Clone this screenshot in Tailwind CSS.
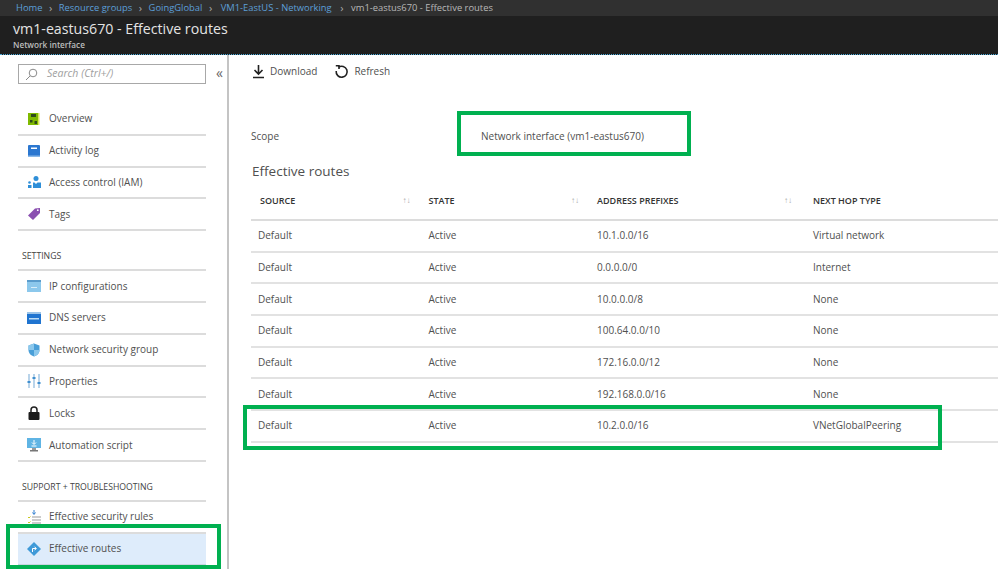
<!DOCTYPE html>
<html lang="en">
<head>
<meta charset="utf-8">
<title>vm1-eastus670 - Effective routes</title>
<script src="https://cdn.jsdelivr.net/npm/@tailwindcss/browser@4"></script>
</head>
<body class="relative h-[585px] w-[998px] overflow-hidden bg-white font-['Open_Sans',sans-serif] text-[10px] text-[#505050]">

<!-- Header -->
<header class="h-[55px] border-b border-dotted border-[#4aa8d8] bg-[#1f1f1f]">
  <nav class="flex h-[16px] items-center gap-[6.5px] bg-[#303030] pl-[16px] text-[9.4px] text-[#5c9fd8]">
    <span>Home</span><span class="text-[11px] text-[#aaa]">›</span>
    <span>Resource groups</span><span class="text-[11px] text-[#aaa]">›</span>
    <span>GoingGlobal</span><span class="text-[11px] text-[#aaa]">›</span>
    <span class="ml-[2px]">VM1-EastUS - Networking</span><span class="ml-[2px] text-[11px] text-[#aaa]">›</span>
    <span class="ml-[1px] text-[#b8b8b8]">vm1-eastus670 - Effective routes</span>
  </nav>
  <h1 class="pl-[13px] pt-[3px] text-[14.2px] leading-[20px] text-[#e4e4e4]">vm1-eastus670 - Effective routes</h1>
  <p class="pl-[13px] text-[8.200px] font-semibold leading-[11px] text-[#bdbdbd]">Network interface</p>
</header>

<div class="flex h-[514px]">
  <!-- Sidebar -->
  <aside class="h-full w-[229px] shrink-0 border-r-2 border-[#c4c4c4] pl-[18px]">
    <div class="flex items-center">
      <div class="mt-[9px] flex h-[20px] w-[188px] items-center gap-[9px] border border-[#a8a8a8] pl-[6px] text-[10.5px] italic text-[#a0a0a0]">
        <svg class="h-[13px] w-[13px]" viewBox="0 0 13 13" fill="none" stroke="#8a8a8a" stroke-width="1"><circle cx="8" cy="5" r="3.8"/><path d="M5.2 7.8 1 12"/></svg>
        <span>Search (Ctrl+/)</span>
      </div>
      <span class="ml-[10px] mt-[6px] text-[14px] leading-none text-[#666]">«</span>
    </div>

    <ul class="mt-[20px] w-[188px]">
      <li class="flex h-[31.8px] items-center gap-[8px] border-b-2 border-[#dcdcdc] pl-[9px]">
        <svg class="h-[14px] w-[14px] shrink-0" viewBox="0 0 14 14"><rect x="1" y="1" width="10" height="12" fill="#7fba00"/><rect x="11" y="1" width="1.5" height="12" fill="#d8e85a"/><rect x="4" y="2" width="5" height="3" fill="#2f4a1a"/><rect x="3" y="8" width="2.5" height="2.5" fill="#2f4a1a"/><rect x="7.5" y="9" width="2.5" height="3" fill="#2f4a1a"/></svg>
        <span>Overview</span>
      </li>
      <li class="flex h-[31.8px] items-center gap-[8px] border-b-2 border-[#dcdcdc] pl-[9px]">
        <svg class="h-[14px] w-[14px] shrink-0" viewBox="0 0 14 14"><rect x="1" y="1" width="12" height="12" rx="1" fill="#2b77d0"/><rect x="4" y="3.5" width="6" height="1.5" fill="#fff"/><rect x="1" y="11.5" width="12" height="1.5" fill="#8ab8e8"/></svg>
        <span>Activity log</span>
      </li>
      <li class="flex h-[31.8px] items-center gap-[8px] border-b-2 border-[#dcdcdc] pl-[9px]">
        <svg class="h-[14px] w-[14px] shrink-0" viewBox="0 0 14 14"><circle cx="9" cy="3.5" r="2.5" fill="#2f8fd8"/><path d="M6 13V7.5h1.5L9 9l1.5-1.5H14V13Z" fill="#2f8fd8"/><circle cx="2.5" cy="7.5" r="1.3" fill="#2f8fd8"/><rect x="1" y="10" width="3.5" height="3" fill="#2f8fd8"/></svg>
        <span>Access control (IAM)</span>
      </li>
      <li class="flex h-[31.8px] items-center gap-[8px] border-b-2 border-[#dcdcdc] pl-[9px]">
        <svg class="h-[14px] w-[14px] shrink-0" viewBox="0 0 14 14"><path d="M1 8.5 8 1.5l5-.5v5l-7 7Z" fill="#8a4fb0"/><circle cx="10.8" cy="3.2" r=".9" fill="#fff"/></svg>
        <span>Tags</span>
      </li>
    </ul>

    <h2 class="mt-[19px] flex h-[21px] w-[188px] items-start border-b-2 border-[#dcdcdc] pl-[4px] text-[8.700px] leading-[13px] text-[#444]">SETTINGS</h2>
    <ul class="w-[188px]">
      <li class="flex h-[31.8px] items-center gap-[8px] border-b-2 border-[#dcdcdc] pl-[9px]">
        <svg class="h-[14px] w-[14px] shrink-0" viewBox="0 0 14 14"><rect y="1" width="14" height="12" fill="#8cc8ec"/><rect y="1" width="14" height="2" fill="#5a9ccc"/><rect x="4" y="8" width="6" height="1" fill="#d8eefa"/></svg>
        <span>IP configurations</span>
      </li>
      <li class="flex h-[31.8px] items-center gap-[8px] border-b-2 border-[#dcdcdc] pl-[9px]">
        <svg class="h-[14px] w-[14px] shrink-0" viewBox="0 0 14 14"><rect y="1" width="14" height="12" fill="#1f74d0"/><rect y="1" width="14" height="2" fill="#9cc4e8"/><rect x="2" y="7" width="10" height="1.5" fill="#bcdcf4"/></svg>
        <span>DNS servers</span>
      </li>
      <li class="flex h-[31.8px] items-center gap-[8px] border-b-2 border-[#dcdcdc] pl-[9px]">
        <svg class="h-[14px] w-[14px] shrink-0" viewBox="0 0 14 14"><path d="M7 .5 12.5 2.5V7c0 3.5-2.5 5.5-5.5 6.5C4 12.500 1.500 10.500 1.500 7V2.500Z" fill="#4a9fd8"/><path d="M7 .5V7H1.500V2.500ZM7 7h5.500c0 3.500-2.500 5.500-5.500 6.500Z" fill="#8cc8ec"/></svg>
        <span>Network security group</span>
      </li>
      <li class="flex h-[31.8px] items-center gap-[8px] border-b-2 border-[#dcdcdc] pl-[9px]">
        <svg class="h-[14px] w-[14px] shrink-0" viewBox="0 0 14 14"><path d="M2 0v14M7 0v14M12 0v14" stroke="#8cb8dc" stroke-width="1.200"/><rect x=".5" y="7" width="3" height="2" fill="#3f8fd0"/><rect x="5.500" y="3" width="3" height="2" fill="#3f8fd0"/><rect x="10.500" y="8" width="3" height="2" fill="#3f8fd0"/></svg>
        <span>Properties</span>
      </li>
      <li class="flex h-[31.8px] items-center gap-[8px] border-b-2 border-[#dcdcdc] pl-[9px]">
        <svg class="h-[14px] w-[14px] shrink-0" viewBox="0 0 14 14"><path d="M4 6V4a3 3 0 0 1 6 0v2" fill="none" stroke="#222" stroke-width="1.500"/><rect x="1.500" y="6" width="11" height="8" rx="1" fill="#1c1c1c"/></svg>
        <span>Locks</span>
      </li>
      <li class="flex h-[31.8px] items-center gap-[8px] border-b-2 border-[#dcdcdc] pl-[9px]">
        <svg class="h-[14px] w-[14px] shrink-0" viewBox="0 0 14 14"><rect y="0" width="14" height="10" fill="#5fb4e4"/><path d="M7 2v4M5 4.500 7 6.500 9 4.500M4.500 8h5" stroke="#fff" fill="none"/><rect x="5" y="10" width="4" height="2" fill="#999"/><rect x="3" y="12" width="8" height="1.500" fill="#777"/></svg>
        <span>Automation script</span>
      </li>
    </ul>

    <h2 class="mt-[19px] flex h-[21px] w-[188px] items-start border-b-2 border-[#dcdcdc] pl-[4px] text-[8.700px] leading-[13px] text-[#444]">SUPPORT + TROUBLESHOOTING</h2>
    <ul class="w-[188px]">
      <li class="flex h-[31.8px] items-center gap-[8px] border-b-2 border-[#dcdcdc] pl-[9px]">
        <svg class="h-[14px] w-[14px] shrink-0" viewBox="0 0 14 14"><path d="M7 0v4M5.500 2.500 7 4.500 8.500 2.500" stroke="#2f7fd0" fill="none"/><path d="M5 7h9M5 10h9M5 13h9" stroke="#999"/><path d="M1 7l1 1 1.500-1.500M1 12l1 1 1.500-1.500" stroke="#c8c820" fill="none"/></svg>
        <span>Effective security rules</span>
      </li>
      <li class="flex h-[31.8px] items-center gap-[8px] border-b-2 border-[#c8d4e0] bg-[#deecfb] pl-[9px]">
        <svg class="h-[14px] w-[14px] shrink-0" viewBox="0 0 14 14"><path d="M7 0 14 7 7 14 0 7Z" fill="#3f9ad8"/><path d="M5.500 10V6.500H9M7.500 4.700 9.300 6.500 7.500 8.300" stroke="#fff" fill="none"/></svg>
        <span>Effective routes</span>
      </li>
    </ul>
  </aside>

  <!-- Main -->
  <main class="min-w-0 flex-1 pl-[22px]">
    <div class="flex h-[32px] items-center gap-[17px]">
      <span class="flex items-center gap-[4px]">
        <svg class="h-[15px] w-[15px]" viewBox="0 0 15 15" fill="none" stroke="#222" stroke-width="1.600"><path d="M7.500 1v8.500M3.500 6 7.500 10 11.500 6M2 13.500h11"/></svg>
        Download
      </span>
      <span class="flex items-center gap-[5px]">
        <svg class="h-[15px] w-[15px]" viewBox="0 0 15 15" fill="none" stroke="#222" stroke-width="1.600"><path d="M4.500 3.200a5.500 5.500 0 1 1-2.300 3.800"/><path d="M1.800 1.800h3.200V5"/></svg>
        Refresh
      </span>
    </div>

    <div class="mt-[40px] flex h-[18px] items-center">
      <span class="w-[230px]">Scope</span>
      <span>Network interface (vm1-eastus670)</span>
    </div>
    <h2 class="mt-[16px] pl-[1px] text-[13.5px] leading-[20px] text-[#505050]">Effective routes</h2>

    <div class="mt-[2px] w-[747px]">
      <div class="grid h-[38px] grid-cols-[168.5px_168.5px_216px_1fr] items-center border-b-2 border-[#dcdcdc] text-[9px] font-semibold text-[#333]">
        <div class="flex items-center justify-between pl-[9px] pr-[9px]"><span>SOURCE</span><span class="mb-[3px] text-[8px] text-[#aaa]">↑↓</span></div>
        <div class="flex items-center justify-between pl-[9px] pr-[9px]"><span>STATE</span><span class="mb-[3px] text-[8px] text-[#aaa]">↑↓</span></div>
        <div class="flex items-center justify-between pl-[9px] pr-[12px]"><span>ADDRESS PREFIXES</span><span class="mb-[3px] text-[8px] text-[#aaa]">↑↓</span></div>
        <div class="pl-[9px]">NEXT HOP TYPE</div>
      </div>
      <div class="grid h-[31.7px] grid-cols-[168.5px_168.5px_216px_1fr] items-center border-b-2 border-[#e2e2e2]">
        <div class="pl-[7px]">Default</div><div class="pl-[9px]">Active</div><div class="pl-[9px]">10.1.0.0/16</div><div class="pl-[9px]">Virtual network</div>
      </div>
      <div class="grid h-[31.7px] grid-cols-[168.5px_168.5px_216px_1fr] items-center border-b-2 border-[#e2e2e2]">
        <div class="pl-[7px]">Default</div><div class="pl-[9px]">Active</div><div class="pl-[9px]">0.0.0.0/0</div><div class="pl-[9px]">Internet</div>
      </div>
      <div class="grid h-[31.7px] grid-cols-[168.5px_168.5px_216px_1fr] items-center border-b-2 border-[#e2e2e2]">
        <div class="pl-[7px]">Default</div><div class="pl-[9px]">Active</div><div class="pl-[9px]">10.0.0.0/8</div><div class="pl-[9px]">None</div>
      </div>
      <div class="grid h-[31.7px] grid-cols-[168.5px_168.5px_216px_1fr] items-center border-b-2 border-[#e2e2e2]">
        <div class="pl-[7px]">Default</div><div class="pl-[9px]">Active</div><div class="pl-[9px]">100.64.0.0/10</div><div class="pl-[9px]">None</div>
      </div>
      <div class="grid h-[31.7px] grid-cols-[168.5px_168.5px_216px_1fr] items-center border-b-2 border-[#e2e2e2]">
        <div class="pl-[7px]">Default</div><div class="pl-[9px]">Active</div><div class="pl-[9px]">172.16.0.0/12</div><div class="pl-[9px]">None</div>
      </div>
      <div class="grid h-[31.7px] grid-cols-[168.5px_168.5px_216px_1fr] items-center border-b-2 border-[#e2e2e2]">
        <div class="pl-[7px]">Default</div><div class="pl-[9px]">Active</div><div class="pl-[9px]">192.168.0.0/16</div><div class="pl-[9px]">None</div>
      </div>
      <div class="grid h-[31.7px] grid-cols-[168.5px_168.5px_216px_1fr] items-center border-b-2 border-[#e2e2e2]">
        <div class="pl-[7px]">Default</div><div class="pl-[9px]">Active</div><div class="pl-[9px]">10.2.0.0/16</div><div class="pl-[9px]">VNetGlobalPeering</div>
      </div>
    </div>
  </main>
</div>

<!-- Green annotation boxes drawn over the screenshot -->
<div class="absolute left-[457px] top-[111px] h-[45px] w-[234px] border-[4px] border-[#00b050]"></div>
<div class="absolute left-[243px] top-[405px] h-[45px] w-[699px] border-[4px] border-[#00b050]"></div>
<div class="absolute left-[6px] top-[524px] h-[45px] w-[215px] border-[4px] border-[#00b050]"></div>
</body>
</html>
